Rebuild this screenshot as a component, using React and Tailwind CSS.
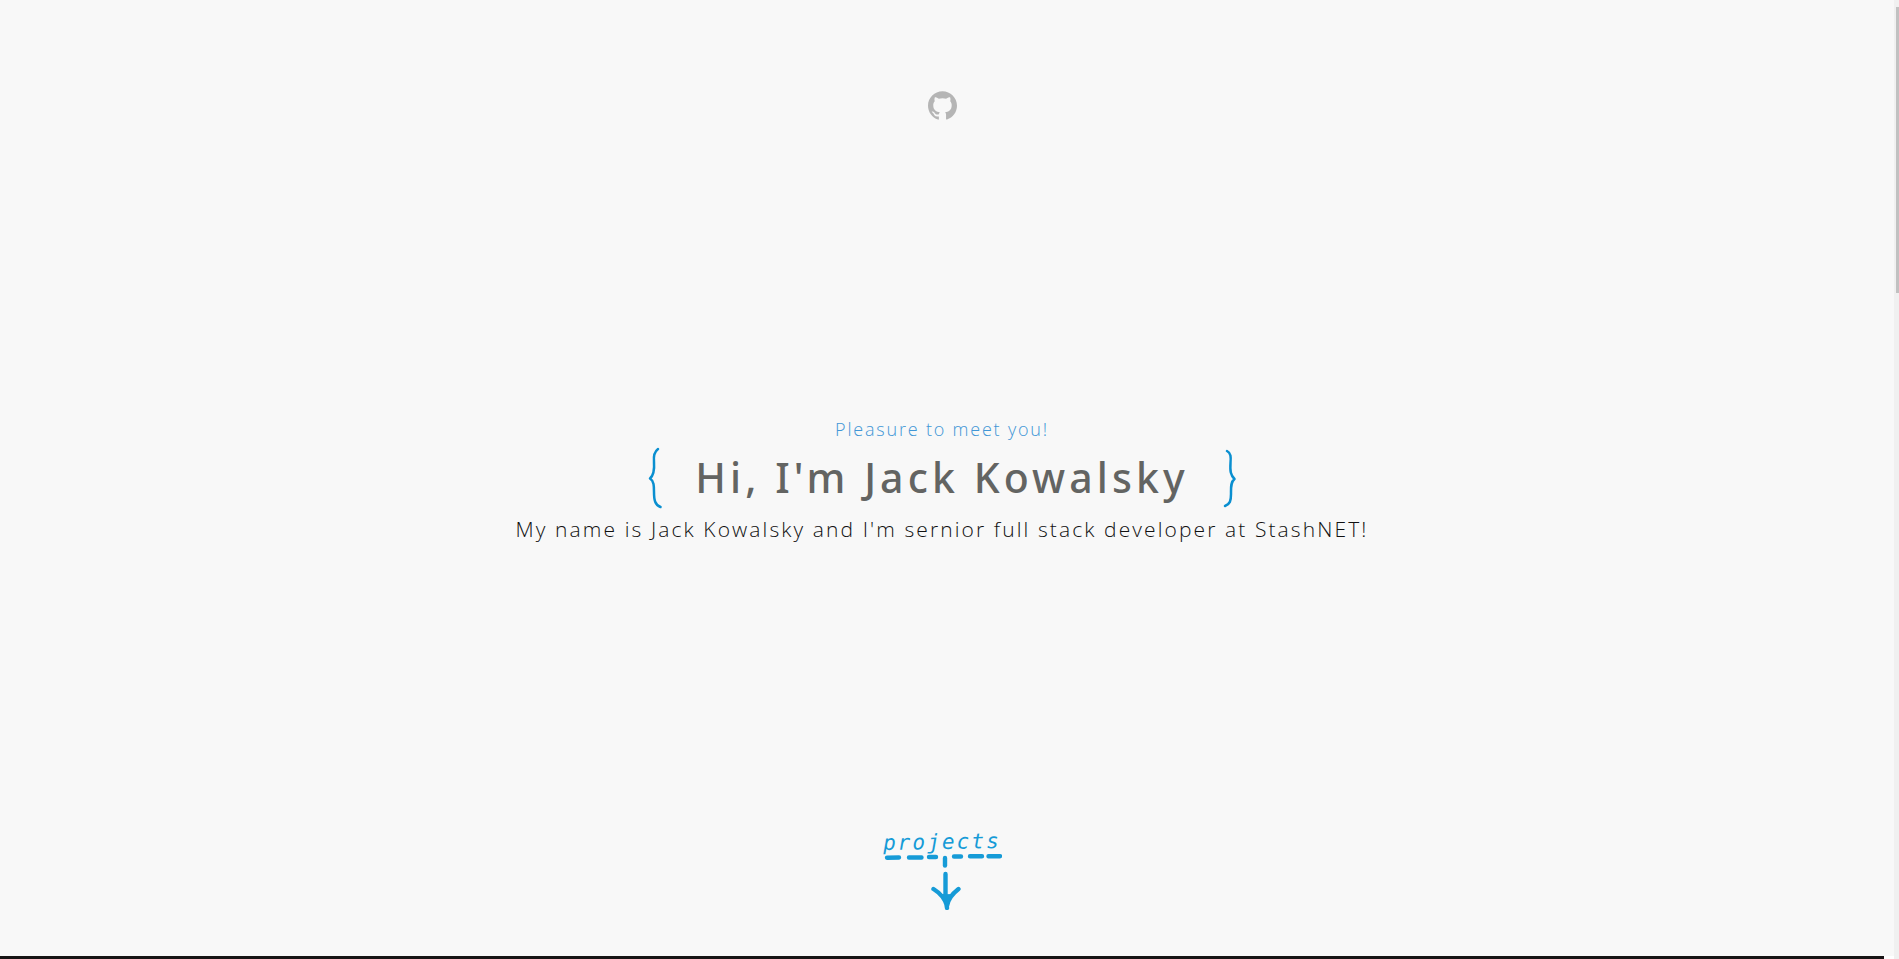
import { SiGithub } from "react-icons/si";

function LeftBrace() {
  return (
    <svg className="h-16 w-4" viewBox="-1 -1 16 64" fill="none" stroke="#0a8fd0" strokeWidth="2.5" strokeLinecap="round" strokeLinejoin="round" aria-hidden="true">
      <path d="M10 3 C6 6 5.500 11 6 16 C6.500 23 6 29 2 32.500 C6 35 6 40 6 46 C6 54 7 59 12.500 61" />
    </svg>
  );
}

function RightBrace() {
  return (
    <svg className="h-16 w-4" viewBox="-1 -1 16 64" fill="none" stroke="#0a8fd0" strokeWidth="2.5" strokeLinecap="round" strokeLinejoin="round" aria-hidden="true">
      <path d="M5 5 C9 7 9 11 8.500 17 C8 25 8.500 29 12.500 33 C8.500 36 9 42 9 48 C9 55 8 58 3 60" />
    </svg>
  );
}

function ProjectsArrow() {
  return (
    <svg className="h-14 w-30" viewBox="-1 1 120 56" fill="none" stroke="#169bd7" strokeWidth="4.4" strokeLinecap="round" strokeLinejoin="round" aria-hidden="true">
      <path d="M4 4.800 L16 4.500 M26 4.500 L38.500 4.500 M46 4 L53 4 M71 3.500 L78 3.500 M87 3.300 L99 3.300 M105.500 3.200 L117 3.200" />
      <path d="M62 5 L62 12.500" />
      <path d="M62.500 21 L62.500 46 L64 55 M50.500 36 C57 40 62 46 64 53 C65 46 69 41 75.500 36" />
      <path d="M58 42 L64 54 L68.500 42 Z" fill="#169bd7" strokeWidth="1" />
    </svg>
  );
}

export default function App() {
  return (
    <div className="flex h-screen overflow-hidden bg-white font-['Open_Sans','Noto_Sans',sans-serif]">
      <main className="flex min-w-0 flex-1 flex-col">
        <section className="flex flex-1 flex-col items-center justify-between bg-[#f8f8f8] pt-[91px] pr-[10px] pb-[46px]">
          <a href="#github" aria-label="GitHub" className="pb-3 text-[#b5b5b5]">
            <SiGithub className="size-[29px]" />
          </a>
          <div className="flex flex-col items-center text-center">
            <p className="text-lg leading-6 font-light tracking-widest text-[#4196d6]">Pleasure to meet you!</p>
            <div className="flex items-center gap-8 py-1">
              <LeftBrace />
              <h1 className="font-['Noto_Sans',sans-serif] text-[41px] leading-[64px] font-medium tracking-widest text-[#636462]">Hi, I'm Jack Kowalsky</h1>
              <RightBrace />
            </div>
            <p className="text-[21px] leading-8 font-light tracking-widest text-[#111]">
              My name is Jack Kowalsky and I'm sernior full stack developer at StashNET!
            </p>
          </div>
          <a href="#projects" className="flex flex-col items-center text-[#169bd7]">
            <span className="-rotate-1 font-['DejaVu_Sans_Mono',monospace] text-[21px] leading-6 tracking-widest italic">projects</span>
            <ProjectsArrow />
          </a>
        </section>
        <div id="projects" className="mr-[10px] h-[3px] bg-[#171415]" />
      </main>
      <div className="w-[5px] bg-[#f0f0f0] pt-[7px] pl-[2px]" aria-hidden="true">
        <div className="h-[30%] bg-[#c1c1c1]" />
      </div>
    </div>
  );
}
